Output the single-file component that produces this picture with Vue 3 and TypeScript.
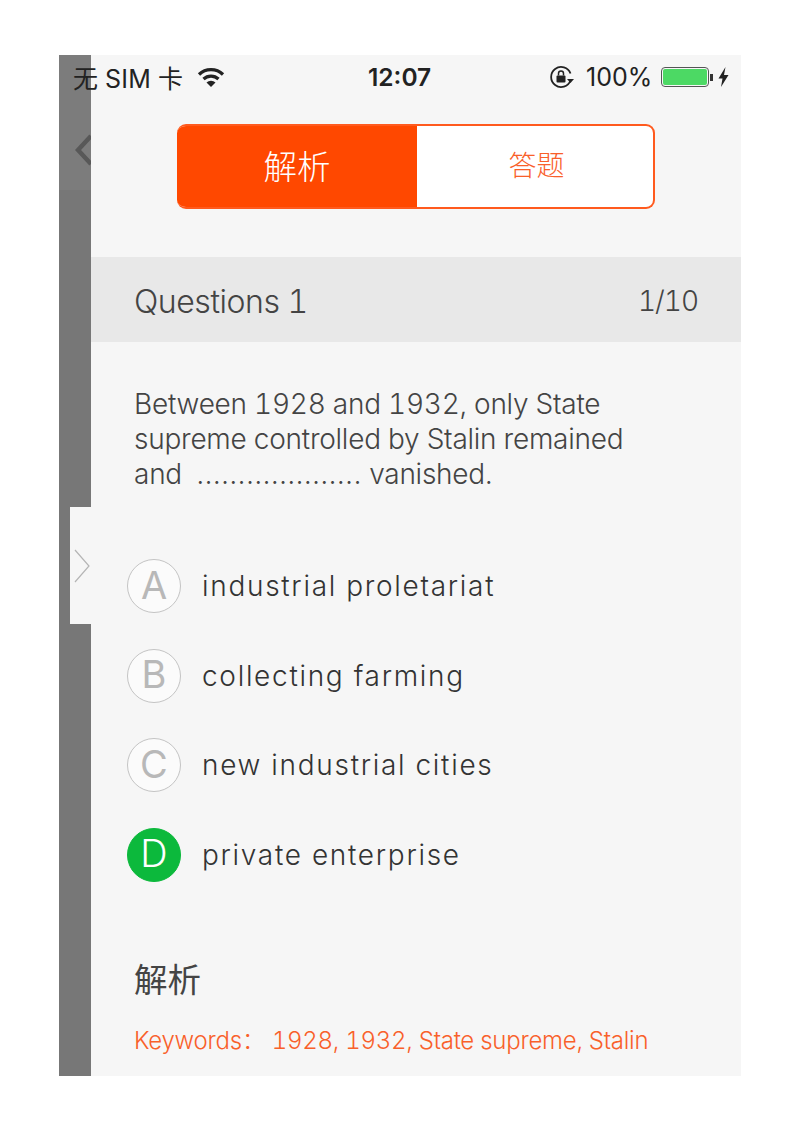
<script setup lang="ts">
interface Option {
  letter: string;
  text: string;
  selected?: boolean;
}

const options: Option[] = [
  { letter: 'A', text: 'industrial proletariat' },
  { letter: 'B', text: 'collecting farming' },
  { letter: 'C', text: 'new industrial cities' },
  { letter: 'D', text: 'private enterprise', selected: true },
];
</script>

<template>
  <div class="device">
    <div class="strip">
      <svg class="back" width="16" height="32" viewBox="0 0 16 32">
        <path d="M16 2 L3 16 L16 30" fill="none" stroke="#585858" stroke-width="4.5" />
      </svg>
    </div>

    <main class="panel">
      <div class="tabs">
        <div class="tab active">解析</div>
        <div class="tab">答题</div>
      </div>

      <div class="q-head">
        <span class="q-title">Questions 1</span>
        <span class="q-count">1/10</span>
      </div>

      <p class="q-text">
        Between 1928 and 1932, only State<br />
        supreme controlled by Stalin remained<br />
        and &nbsp;<span class="blank">....................</span> vanished.
      </p>

      <ul class="options">
        <li v-for="o in options" :key="o.letter" class="option">
          <span :class="['badge', { selected: o.selected }]">{{ o.letter }}</span>
          <span class="option-text">{{ o.text }}</span>
        </li>
      </ul>

      <h2 class="analysis">解析</h2>
      <p class="keywords">Keywords： 1928, 1932, State supreme, Stalin</p>
    </main>

    <div class="status">
      <div class="status-left">
        <span>无 SIM 卡</span>
        <svg width="28" height="20" viewBox="0 0 28 20">
          <path d="M2 7.5 A17 17 0 0 1 26 7.5" fill="none" stroke="#222" stroke-width="3.2" />
          <path d="M6.5 12 A11 11 0 0 1 21.5 12" fill="none" stroke="#222" stroke-width="3.2" />
          <path d="M14 20 L9.5 15.5 A6.5 6.5 0 0 1 18.5 15.5 Z" fill="#222" />
        </svg>
      </div>
      <div class="status-time">12:07</div>
      <div class="status-right">
        <svg class="lock" width="26" height="24" viewBox="0 0 26 24">
          <path d="M21.5 15.5 A10 10 0 1 1 21.5 8.5" fill="none" stroke="#222" stroke-width="1.8" />
          <path d="M18 14 L25 14 L21.5 18 Z" fill="#222" />
          <rect x="7.5" y="10.5" width="9" height="7" rx="1" fill="#222" />
          <path d="M9.5 10.5 V8.5 A2.5 2.5 0 0 1 14.5 8.5 V10.5" fill="none" stroke="#222" stroke-width="1.5" />
        </svg>
        <span class="pct">100%</span>
        <div class="battery"><div class="battery-fill"></div></div>
        <div class="battery-tip"></div>
        <svg class="bolt" width="11" height="20" viewBox="0 0 11 20">
          <path d="M7.5 0 L0.5 11.5 H4.5 L3 20 L10.5 8 H6 Z" fill="#222" />
        </svg>
      </div>
    </div>

    <div class="handle">
      <svg width="16" height="34" viewBox="0 0 16 34">
        <path d="M1 1 L15 17 L1 33" fill="none" stroke="#b5b5b5" stroke-width="1.2" />
      </svg>
    </div>
  </div>
</template>

<style>
html,
body {
  margin: 0;
  background: #fff;
}
</style>

<style scoped>
.device {
  position: relative;
  display: flex;
  width: 682px;
  height: 1021px;
  margin: 55px 0 0 59px;
  overflow: hidden;
  font-family: Inter, 'Noto Sans CJK SC', sans-serif;
  font-weight: 300;
  font-variant-numeric: tabular-nums;
  color: #444;
}

.strip {
  position: relative;
  flex: 0 0 32px;
  background: linear-gradient(#7c7c7c 135px, #777 135px);
}

.back {
  position: absolute;
  left: 16px;
  top: 79px;
}

.panel {
  flex: 1;
  min-width: 0;
  background: #f6f6f6;
  padding-top: 69px;
}

.tabs {
  display: flex;
  width: 478px;
  height: 85px;
  margin-left: 86px;
  box-sizing: border-box;
  border: 2px solid #ff5a1e;
  border-left: 0;
  border-radius: 9px;
  overflow: hidden;
  background: #fff;
}

.tab {
  flex: 1;
  display: flex;
  align-items: center;
  justify-content: center;
  padding: 0 0 5px 3px;
  font-size: 28px;
  color: #f9602a;
}

.tab.active {
  flex: 0 0 240px;
  box-sizing: border-box;
  padding: 0 0 5px;
  background: #ff4800;
  color: #fff;
  font-size: 33.5px;
  margin: -2px 0;
}

.q-head {
  display: flex;
  justify-content: space-between;
  align-items: center;
  height: 85px;
  box-sizing: border-box;
  margin-top: 48px;
  padding: 3px 43px 0;
  background: #e8e8e8;
}

.q-title {
  font-size: 32px;
  letter-spacing: -0.45px;
  color: #444;
}

.q-count {
  font-size: 28px;
  letter-spacing: -1px;
  color: #444;
}

.q-text {
  margin: 45px 0 0;
  padding-left: 43px;
  font-size: 28px;
  letter-spacing: -0.25px;
  line-height: 35px;
  color: #444;
}

.blank {
  letter-spacing: 0.75px;
}

.options {
  list-style: none;
  margin: 67px 0 0;
  padding: 0 0 0 36px;
  display: grid;
  gap: 35.5px;
}

.option {
  display: flex;
  align-items: center;
  gap: 21px;
  height: 54px;
}

.badge {
  display: flex;
  align-items: center;
  justify-content: center;
  width: 54px;
  height: 54px;
  box-sizing: border-box;
  padding-bottom: 3px;
  border: 1px solid #c4c4c4;
  border-radius: 50%;
  background: #fbfbfb;
  font-size: 38px;
  font-weight: 400;
  color: #b8b8b8;
}

.badge.selected {
  background: #0cb93c;
  border-color: #0cb93c;
  color: #fff;
  font-weight: 300;
}

.option-text {
  font-size: 28px;
  letter-spacing: 1.7px;
  color: #333;
}

.analysis {
  margin: 76px 0 0;
  padding-left: 43px;
  font-size: 33.5px;
  line-height: 44px;
  font-weight: 400;
  color: #444;
}

.keywords {
  margin: 23px 0 0;
  padding-left: 43px;
  font-size: 24px;
  letter-spacing: -0.25px;
  line-height: 32px;
  color: #f9602a;
}

.status {
  position: absolute;
  left: 0;
  right: 0;
  top: 0;
  height: 44px;
  display: flex;
  align-items: center;
  font-size: 25px;
  font-weight: 400;
  color: #222;
}

.status-left {
  position: absolute;
  left: 14px;
  display: flex;
  align-items: center;
  gap: 14px;
  letter-spacing: 0.2px;
}

.status-time {
  position: absolute;
  left: 309px;
  font-size: 24.5px;
  font-weight: 600;
  font-variant-numeric: normal;
}

.status-right {
  position: absolute;
  left: 490px;
  display: flex;
  align-items: center;
}

.pct {
  margin-left: 11px;
  font-variant-numeric: normal;
}

.battery {
  margin-left: 9px;
  width: 48px;
  height: 20px;
  box-sizing: border-box;
  border: 1px solid #555;
  border-radius: 4px;
  padding: 1px;
}

.battery-fill {
  height: 100%;
  background: #4cd964;
  border-radius: 2px;
}

.battery-tip {
  width: 3px;
  height: 7px;
  margin-left: 1px;
  background: #333;
}

.bolt {
  margin-left: 5px;
}

.handle {
  position: absolute;
  left: 11px;
  top: 452px;
  width: 21px;
  height: 117px;
  background: #f6f6f6;
  display: flex;
  align-items: center;
  padding-left: 4px;
  box-sizing: border-box;
}
</style>
